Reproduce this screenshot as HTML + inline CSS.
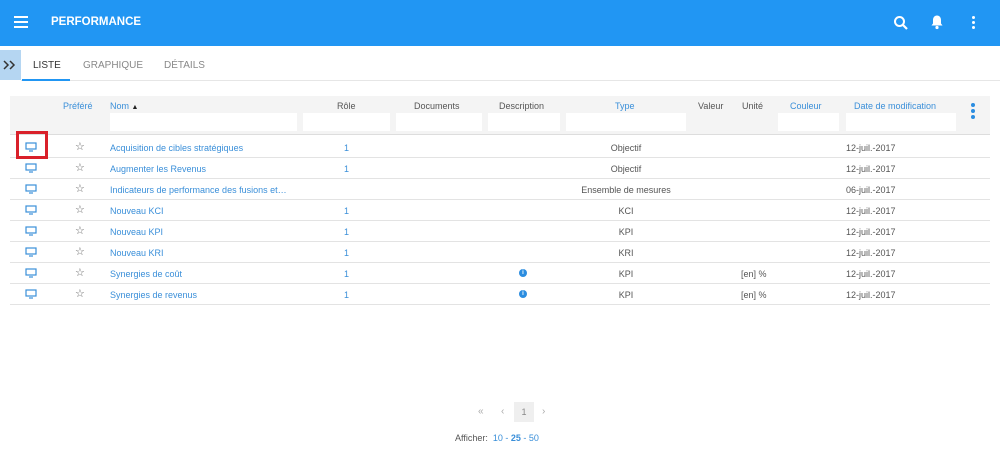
<!DOCTYPE html>
<html><head><meta charset="utf-8"><style>
*{margin:0;padding:0;box-sizing:border-box}
body{width:1000px;height:454px;background:#fff;font-family:"Liberation Sans",sans-serif;position:relative;overflow:hidden;font-size:9px;color:#555}
.hdr{position:absolute;left:0;top:0;width:1000px;height:46px;background:#2196f3}
.abs{position:absolute}
.blue{color:#3a8fd9}
.inp{position:absolute;top:113px;height:18px;background:#fff}
.row{position:absolute;left:10px;width:980px;height:21px;border-bottom:1px solid #e3e3e3}
.c{position:absolute;top:6px;white-space:nowrap}
</style></head><body>
<div class="hdr">
 <div class="abs" style="left:14px;top:16px;width:14px;height:2px;background:#fff;box-shadow:0 5px 0 #fff,0 10px 0 #fff"></div>
 <div class="abs" style="left:51px;top:16px;color:#fff;font-weight:bold;font-size:11.5px;line-height:13px">PERFORMANCE</div>
 <svg class="abs" style="left:893px;top:15px" width="16" height="16" viewBox="0 0 16 16"><circle cx="6.5" cy="6.5" r="4.5" fill="none" stroke="#fff" stroke-width="2"/><path d="M10 10l4 4" stroke="#fff" stroke-width="2.2"/></svg>
 <svg class="abs" style="left:930px;top:14px" width="14" height="16" viewBox="0 0 14 16"><path d="M7 1.5c-2.5 0-4 2-4 4.5v3.5L1.5 11.5h11L11 9.5V6C11 3.5 9.5 1.5 7 1.5z" fill="#fff"/><circle cx="7" cy="13.5" r="1.6" fill="#fff"/></svg>
 <div class="abs" style="left:972px;top:16px;width:3px;height:3px;border-radius:50%;background:#fff;box-shadow:0 5px 0 #fff,0 10px 0 #fff"></div>
</div>
<div class="abs" style="left:0;top:50px;width:21px;height:30px;background:#b5d6f2"></div>
<svg class="abs" style="left:3px;top:59px" width="14" height="12" viewBox="0 0 14 12"><path d="M1 2l4 4-4 4M7 2l4 4-4 4" fill="none" stroke="#333" stroke-width="1.5"/></svg>
<div class="abs" style="left:21px;top:80px;width:979px;height:1px;background:#e6e6e6"></div>
<div class="abs" style="left:22px;top:79px;width:48px;height:2px;background:#2196f3"></div>
<div class="abs" style="left:33px;top:60px;font-size:10px;color:#333">LISTE</div>
<div class="abs" style="left:83px;top:60px;font-size:10px;color:#888">GRAPHIQUE</div>
<div class="abs" style="left:164px;top:60px;font-size:10px;color:#888">DÉTAILS</div>

<div class="abs" style="left:10px;top:96px;width:980px;height:39px;background:#f4f4f4;border-bottom:1px solid #ddd"></div>
<div class="abs blue" style="left:63px;top:101px">Préféré</div>
<div class="abs blue" style="left:110px;top:101px">Nom <span style="color:#222;font-size:7px">▲</span></div>
<div class="abs" style="left:337px;top:101px">Rôle</div>
<div class="abs" style="left:414px;top:101px">Documents</div>
<div class="abs" style="left:499px;top:101px">Description</div>
<div class="abs blue" style="left:615px;top:101px">Type</div>
<div class="abs" style="left:698px;top:101px">Valeur</div>
<div class="abs" style="left:742px;top:101px">Unité</div>
<div class="abs blue" style="left:790px;top:101px">Couleur</div>
<div class="abs blue" style="left:854px;top:101px">Date de modification</div>
<div class="abs" style="left:971px;top:103px;width:4px;height:4px;border-radius:50%;background:#2b8de0;box-shadow:0 6px 0 #2b8de0,0 12px 0 #2b8de0"></div>
<div class="inp" style="left:110px;width:187px"></div>
<div class="inp" style="left:303px;width:87px"></div>
<div class="inp" style="left:396px;width:86px"></div>
<div class="inp" style="left:488px;width:72px"></div>
<div class="inp" style="left:566px;width:120px"></div>
<div class="inp" style="left:778px;width:61px"></div>
<div class="inp" style="left:846px;width:110px"></div>

<div id="rows"></div>
<script>
var d=[["Acquisition de cibles stratégiques","1","","Objectif","","12-juil.-2017"],
["Augmenter les Revenus","1","","Objectif","","12-juil.-2017"],
["Indicateurs de performance des fusions et…","","","Ensemble de mesures","","06-juil.-2017"],
["Nouveau KCI","1","","KCI","","12-juil.-2017"],
["Nouveau KPI","1","","KPI","","12-juil.-2017"],
["Nouveau KRI","1","","KRI","","12-juil.-2017"],
["Synergies de coût","1","i","KPI","[en] %","12-juil.-2017"],
["Synergies de revenus","1","i","KPI","[en] %","12-juil.-2017"]];
var h="";
d.forEach(function(r,i){var t=137+i*21;
h+='<div class="row" style="top:'+t+'px">'+
'<svg class="c" style="left:15px;top:5px" width="12" height="10" viewBox="0 0 12 10"><rect x="1" y="1" width="10" height="6" fill="none" stroke="#3a8fd9" stroke-width="1.2"/><path d="M4 9h4" stroke="#3a8fd9" stroke-width="1.2"/></svg>'+
'<div class="c" style="left:65px;top:3px;font-size:11px;color:#666">☆</div>'+
'<div class="c blue" style="left:100px">'+r[0]+'</div>'+
'<div class="c blue" style="left:334px">'+r[1]+'</div>'+
(r[2]?'<div class="c" style="left:509px;top:6px;width:8px;height:8px;border-radius:50%;background:#2b8de0;color:#fff;font-size:6px;text-align:center;line-height:8px;font-weight:bold">i</div>':'')+
'<div class="c" style="left:556px;width:120px;text-align:center">'+r[3]+'</div>'+
'<div class="c" style="left:731px">'+r[4]+'</div>'+
'<div class="c" style="left:836px">'+r[5]+'</div></div>';});
document.getElementById("rows").innerHTML=h;
</script>
<div class="abs" style="left:16px;top:131px;width:32px;height:28px;border:3px solid #d9202a"></div>

<div class="abs" style="left:478px;top:406px;color:#aaa;font-size:10px">«</div>
<div class="abs" style="left:501px;top:406px;color:#aaa;font-size:10px">‹</div>
<div class="abs" style="left:514px;top:402px;width:20px;height:20px;background:#efefef;color:#888;text-align:center;line-height:20px">1</div>
<div class="abs" style="left:542px;top:406px;color:#aaa;font-size:10px">›</div>
<div class="abs" style="left:455px;top:433px">Afficher: <span class="blue">&nbsp;10 - <b>25</b> - 50</span></div>
</body></html>
